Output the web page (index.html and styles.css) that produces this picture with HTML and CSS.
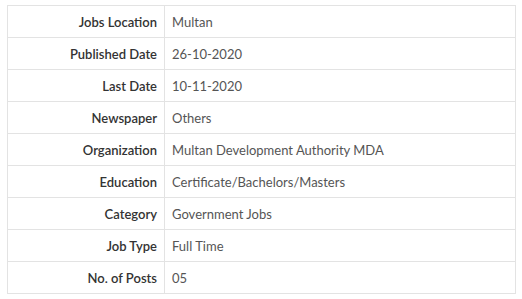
FILE: index.html
```html
<!DOCTYPE html>
<html lang="en">
<head>
  <meta charset="UTF-8">
  <title>Job Details</title>
  <link rel="stylesheet" href="styles.css">
</head>
<body>
  <div class="frame">
    <table class="job-table">
      <tr><th>Jobs Location</th><td>Multan</td></tr>
      <tr><th>Published Date</th><td>26-10-2020</td></tr>
      <tr><th>Last Date</th><td>10-11-2020</td></tr>
      <tr><th>Newspaper</th><td>Others</td></tr>
      <tr><th>Organization</th><td>Multan Development Authority MDA</td></tr>
      <tr><th>Education</th><td>Certificate/Bachelors/Masters</td></tr>
      <tr><th>Category</th><td>Government Jobs</td></tr>
      <tr><th>Job Type</th><td>Full Time</td></tr>
      <tr><th>No. of Posts</th><td>05</td></tr>
    </table>
  </div>
</body>
</html>
```

FILE: styles.css
```css
body {
  margin: 0;
  background: #fff;
  font-family: Lato, "Open Sans", sans-serif;
}
.frame {
  padding: 5px 6px 0 7px;
}
.job-table {
  width: 509px;
  border-collapse: collapse;
  font-size: 13px;
}
.job-table th,
.job-table td {
  border: 1px solid #e3e3e3;
  height: 32px;
  padding: 0 7px;
  box-sizing: border-box;
}
.job-table th {
  width: 157px;
  text-align: right;
  font-weight: 600;
  color: #333;
}
.job-table td {
  text-align: left;
  color: #555;
}
```
